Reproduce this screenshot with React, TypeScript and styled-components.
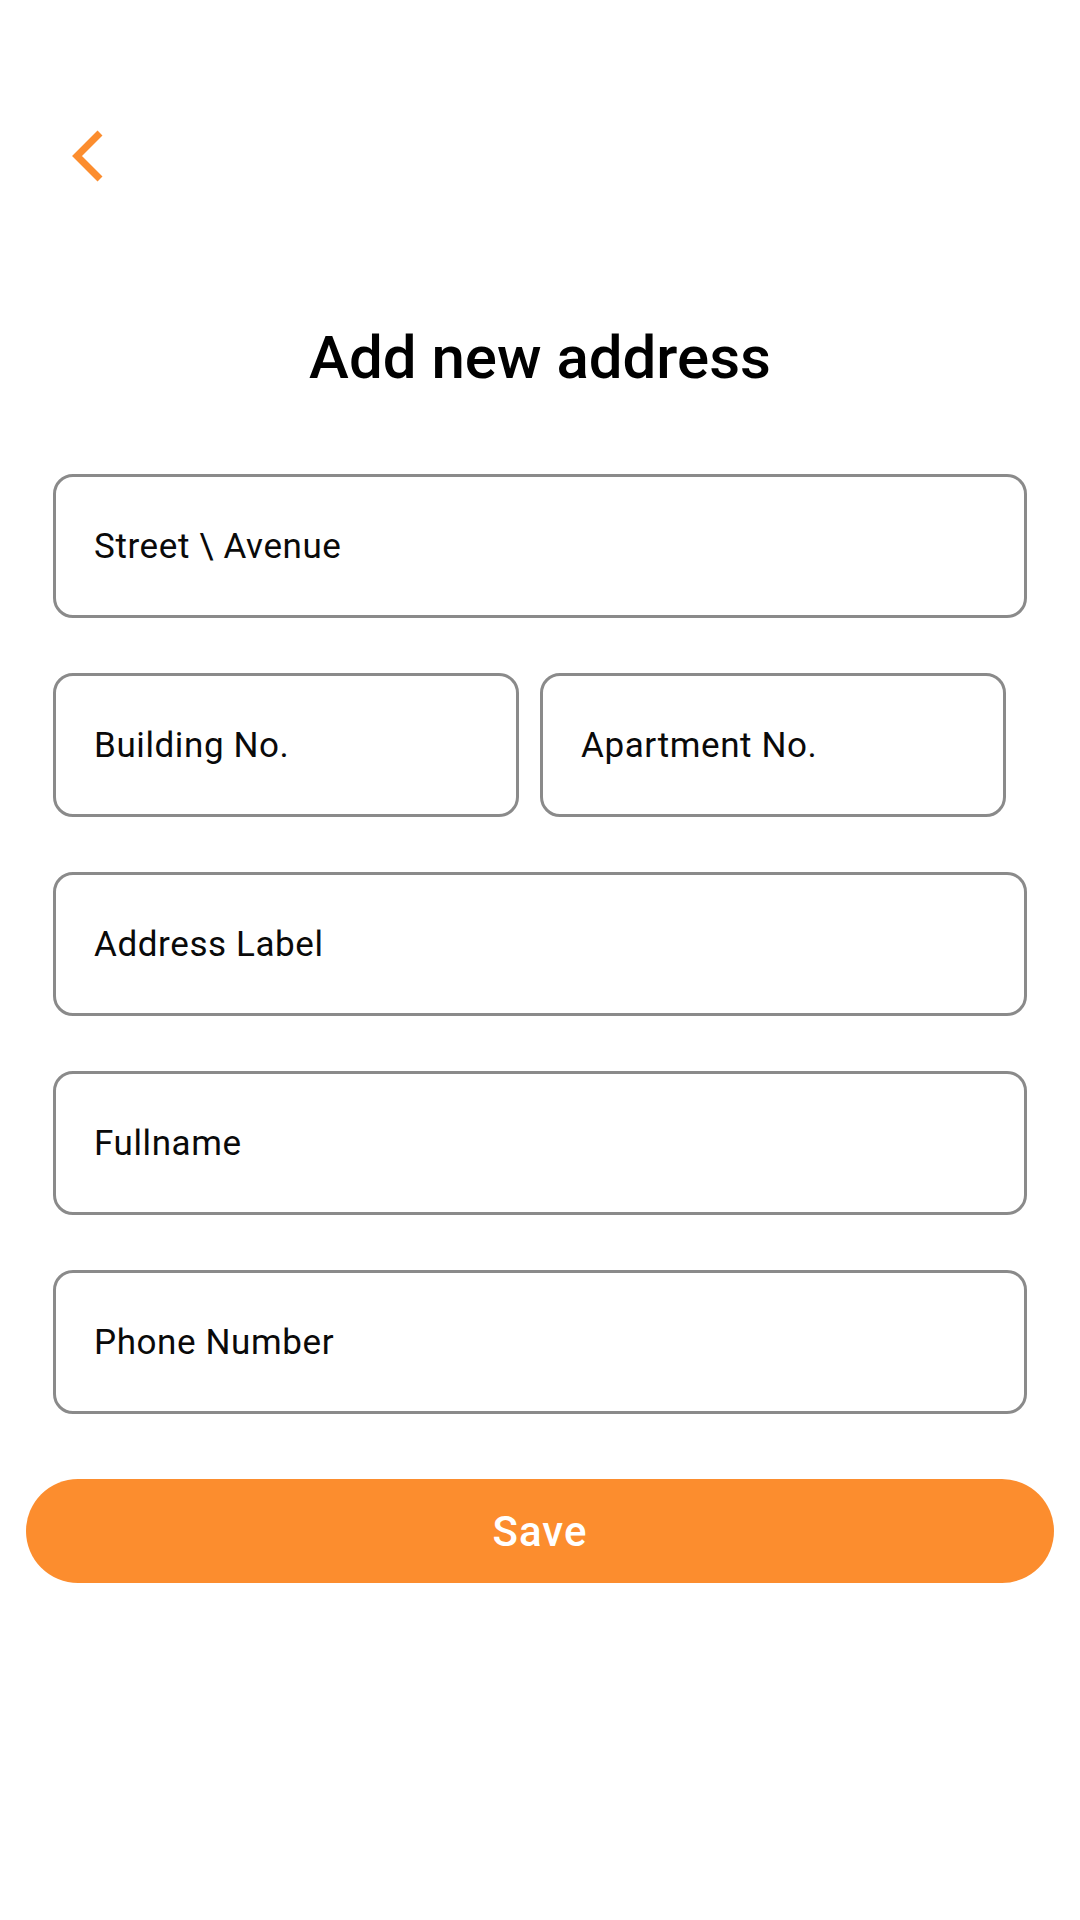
import React from "react";
import styled, { createGlobalStyle } from "styled-components";

const GlobalStyle = createGlobalStyle`
  html, body {
    margin: 0;
    padding: 0;
    background: #ffffff;
    font-family: Roboto, "Noto Sans", "Liberation Sans", sans-serif;
  }
  * { box-sizing: border-box; }
`;

const Page = styled.div`
  width: 1080px;
  min-height: 1920px;
  background: #ffffff;
  padding: 0 26px;
  display: flex;
  flex-direction: column;
`;

const Header = styled.div`
  height: 322px;
  padding: 120px 0 0 34px;
`;

const BackButton = styled.button`
  width: 50px;
  height: 70px;
  padding: 0;
  border: none;
  background: transparent;
  cursor: pointer;
  display: block;
`;

const Title = styled.h1`
  margin: 0;
  height: 72px;
  line-height: 72px;
  font-size: 60px;
  font-weight: 500;
  color: #000000;
  text-align: center;
`;

const Form = styled.form`
  margin: 80px 27px 0;
  display: flex;
  flex-direction: column;
  gap: 55px;
`;

const Row = styled.div`
  display: flex;
  gap: 21px;
`;

const Field = styled.input<{ $width?: number }>`
  display: block;
  width: ${(p) => (p.$width ? `${p.$width}px` : "100%")};
  height: 144px;
  border: 3px solid #8a8a8a;
  border-radius: 20px;
  padding: 0 0 0 38px;
  font-family: Roboto, "Noto Sans", "Liberation Sans", sans-serif;
  font-size: 35px;
  letter-spacing: 0.6px;
  color: #0a0a0a;
  background: #ffffff;
  outline: none;
  &::placeholder {
    color: #0a0a0a;
    opacity: 1;
  }
`;

const SaveButton = styled.button`
  margin-top: 65px;
  width: 100%;
  height: 104px;
  border: none;
  border-radius: 52px;
  background: #fc8d2e;
  color: #ffffff;
  font-family: Roboto, "Noto Sans", "Liberation Sans", sans-serif;
  font-size: 42px;
  font-weight: 500;
  letter-spacing: 1px;
  cursor: pointer;
`;

const ChevronLeft = () => (
  <svg width="50" height="70" viewBox="0 0 50 70" fill="none">
    <polyline
      points="40,13 17,36 40,59"
      stroke="#fc8d2e"
      strokeWidth="7"
      strokeLinecap="butt"
      strokeLinejoin="miter"
    />
  </svg>
);

export default function App() {
  return (
    <>
      <GlobalStyle />
      <Page>
        <Header>
          <BackButton aria-label="Back">
            <ChevronLeft />
          </BackButton>
        </Header>
        <Title>Add new address</Title>
        <Form onSubmit={(e) => e.preventDefault()}>
          <Field placeholder="Street \ Avenue" />
          <Row>
            <Field $width={466} placeholder="Building No." />
            <Field $width={466} placeholder="Apartment No." />
          </Row>
          <Field placeholder="Address Label" />
          <Field placeholder="Fullname" />
          <Field placeholder="Phone Number" />
        </Form>
        <SaveButton type="button">Save</SaveButton>
      </Page>
    </>
  );
}
